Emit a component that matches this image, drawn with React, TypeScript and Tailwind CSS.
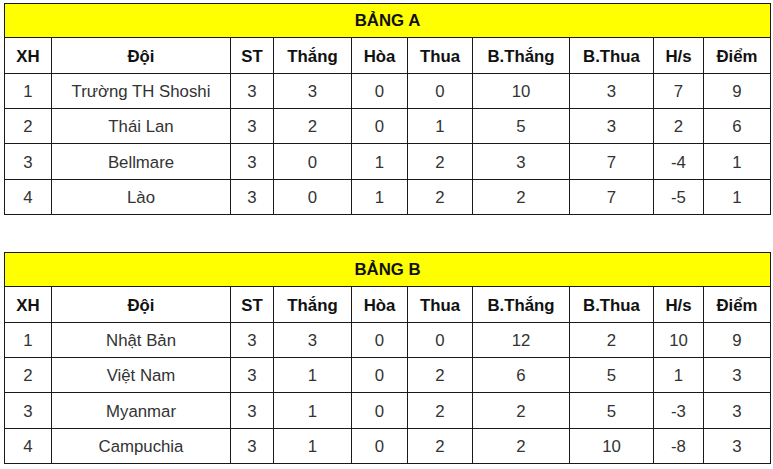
import React from "react"

type Row = [number, string, number, number, number, number, number, number, number, number]

const groupA: Row[] = [
  [1, "Trường TH Shoshi", 3, 3, 0, 0, 10, 3, 7, 9],
  [2, "Thái Lan", 3, 2, 0, 1, 5, 3, 2, 6],
  [3, "Bellmare", 3, 0, 1, 2, 3, 7, -4, 1],
  [4, "Lào", 3, 0, 1, 2, 2, 7, -5, 1],
]

const groupB: Row[] = [
  [1, "Nhật Bản", 3, 3, 0, 0, 12, 2, 10, 9],
  [2, "Việt Nam", 3, 1, 0, 2, 6, 5, 1, 3],
  [3, "Myanmar", 3, 1, 0, 2, 2, 5, -3, 3],
  [4, "Campuchia", 3, 1, 0, 2, 2, 10, -8, 3],
]

const headers = ["XH", "Đội", "ST", "Thắng", "Hòa", "Thua", "B.Thắng", "B.Thua", "H/s", "Điểm"]
const widths = ["w-[47px]", "w-[179px]", "w-[43px]", "w-[78px]", "w-[56px]", "w-[65px]", "w-[97px]", "w-[84px]", "w-[50px]", "w-[67px]"]
const rowHeights = ["h-[35px]", "h-[35px]", "h-[36px]", "h-[35px]"]

function GroupTable({ title, rows }: { title: string; rows: Row[] }) {
  return (
    <table className="table-fixed border-collapse w-[767px] text-center text-[16.8px]">
      <colgroup>
        {widths.map((w, i) => (
          <col key={i} className={w} />
        ))}
      </colgroup>
      <thead>
        <tr className="h-[34px]">
          <th colSpan={10} className="border border-[#1a1a1a] bg-[#ffff00] font-bold text-[#111] pt-px">
            {title}
          </th>
        </tr>
        <tr className="h-[36px]">
          {headers.map((h) => (
            <th key={h} className="border border-[#1a1a1a] font-bold text-[#111] pt-[2px]">
              {h}
            </th>
          ))}
        </tr>
      </thead>
      <tbody>
        {rows.map((r, i) => (
          <tr key={i} className={rowHeights[i]}>
            {r.map((c, j) => (
              <td key={j} className="border border-[#1a1a1a] text-[#333] pt-[2px]">
                {c}
              </td>
            ))}
          </tr>
        ))}
      </tbody>
    </table>
  )
}

export default function App() {
  return (
    <div className="bg-white w-[773px] h-[469px] pt-[3px] pl-[4px] font-['Liberation_Sans',Arial,sans-serif]">
      <div className="flex flex-col gap-[37px]">
        <GroupTable title="BẢNG A" rows={groupA} />
        <GroupTable title="BẢNG B" rows={groupB} />
      </div>
    </div>
  )
}
